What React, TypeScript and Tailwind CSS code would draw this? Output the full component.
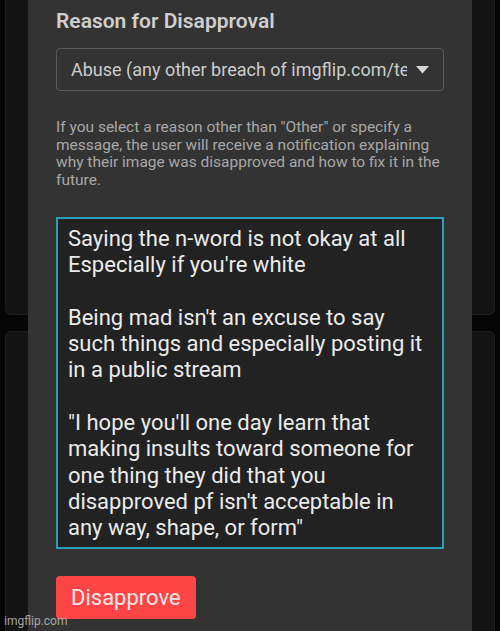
const message = `Saying the n-word is not okay at all
Especially if you're white

Being mad isn't an excuse to say such things and especially posting it in a public stream

"I hope you'll one day learn that making insults toward someone for one thing they did that you disapproved pf isn't acceptable in any way, shape, or form"`;

const BackgroundCards = () => (
  <div className="flex flex-col gap-[16px] px-[5px] -mt-[20px]">
    <div className="h-[335px] rounded-[6px] bg-[#141414] border border-[#1e1e1e]" />
    <div className="h-[400px] rounded-[6px] bg-[#141414] border border-[#1e1e1e]" />
  </div>
);

export default function App() {
  return (
    <div
      className="relative w-[500px] h-[631px] overflow-hidden bg-[#060606]"
      style={{ fontFamily: 'Roboto, "Liberation Sans", sans-serif' }}
    >
      <BackgroundCards />

      <div className="absolute left-[28px] top-0 w-[444px] h-full bg-[#333333] pl-[28px] pr-[28px] pt-[6px]">
        <h2 className="text-[21px] leading-[30px] font-semibold text-[#cfcfcf]">Reason for Disapproval</h2>

        <div className="mt-[12px] flex items-center h-[43px] rounded-[4px] border border-[#5a5a5a] pl-[14px] pr-[14px] gap-[9px]">
          <span className="flex-1 overflow-hidden whitespace-nowrap text-[18px] text-[#cccccc]">
            Abuse (any other breach of imgflip.com/terms)
          </span>
          <svg width="13" height="8" viewBox="0 0 13 8" className="shrink-0">
            <polygon points="0,0 13,0 6.5,7.5" fill="#d8d8d8" />
          </svg>
        </div>

        <p className="mt-[28px] text-[15.5px] leading-[17.5px] text-[#a8a8a8]">
          If you select a reason other than "Other" or specify a message, the user will receive a notification explaining why their image was disapproved and how to fix it in the future.
        </p>

        <div className="mt-[28px] h-[332px] border-2 border-[#2b9fbb] bg-[#222222] pl-[10px] pr-[10px] pt-[7px] text-[22px] leading-[26.3px] text-[#ebebeb] whitespace-pre-wrap">
          {message}
        </div>

        <button className="mt-[27px] h-[43px] px-[15px] rounded-[4px] bg-[#fd4545] text-[22px] text-[#f6e6e6]">
          Disapprove
        </button>
      </div>

      <div className="absolute left-[4px] bottom-[3px] text-[12px] leading-[14px] text-[#c8c8c8]/80">imgflip.com</div>
    </div>
  );
}
